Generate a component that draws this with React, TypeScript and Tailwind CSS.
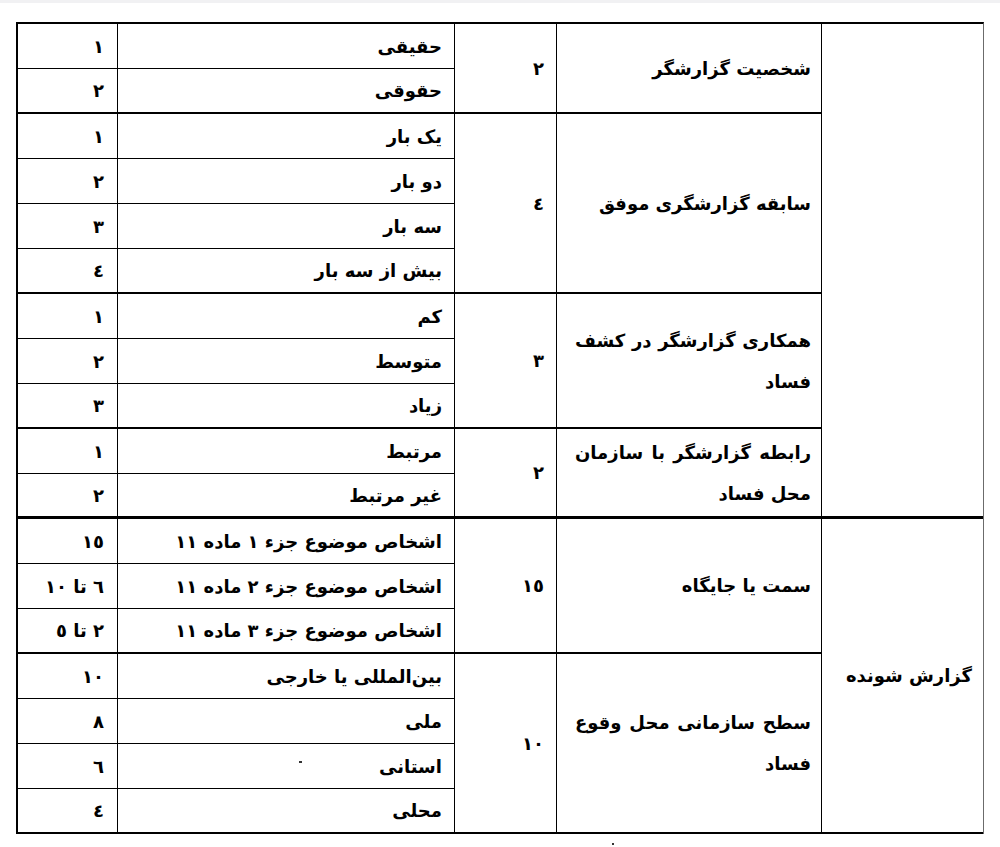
import React from "react";

type Opt = { t: string; s: string };
type Group = { name: string[]; w: string; opts: Opt[] };
type Cat = { name: string; groups: Group[] };

const data: Cat[] = [
  {
    name: "",
    groups: [
      { name: ["شخصیت گزارشگر"], w: "٢", opts: [{ t: "حقیقی", s: "١" }, { t: "حقوقی", s: "٢" }] },
      {
        name: ["سابقه گزارشگری موفق"],
        w: "٤",
        opts: [
          { t: "یک بار", s: "١" },
          { t: "دو بار", s: "٢" },
          { t: "سه بار", s: "٣" },
          { t: "بیش از سه بار", s: "٤" },
        ],
      },
      {
        name: ["همکاری گزارشگر در کشف", "فساد"],
        w: "٣",
        opts: [
          { t: "کم", s: "١" },
          { t: "متوسط", s: "٢" },
          { t: "زیاد", s: "٣" },
        ],
      },
      {
        name: ["رابطه گزارشگر با سازمان", "محل فساد"],
        w: "٢",
        opts: [
          { t: "مرتبط", s: "١" },
          { t: "غیر مرتبط", s: "٢" },
        ],
      },
    ],
  },
  {
    name: "گزارش شونده",
    groups: [
      {
        name: ["سمت یا جایگاه"],
        w: "١٥",
        opts: [
          { t: "اشخاص موضوع جزء ١ ماده ١١", s: "١٥" },
          { t: "اشخاص موضوع جزء ٢ ماده ١١", s: "٦ تا ١٠" },
          { t: "اشخاص موضوع جزء ٣ ماده ١١", s: "٢ تا ٥" },
        ],
      },
      {
        name: ["سطح سازمانی محل وقوع", "فساد"],
        w: "١٠",
        opts: [
          { t: "بین‌المللی یا خارجی", s: "١٠" },
          { t: "ملی", s: "٨" },
          { t: "استانی", s: "٦" },
          { t: "محلی", s: "٤" },
        ],
      },
    ],
  },
];

const B_THIN = "border-b-[1.5px]";
const B_GROUP = "border-b-[2.5px]";
const B_CAT = "border-b-[3px]";

function OptRow({ o, bottom }: { o: Opt; bottom: string }) {
  return (
    <div className={`flex h-[45px] border-black ${bottom}`}>
      <div className="flex-1 flex items-center pr-[12px] border-l-[1.5px] border-black">{o.t}</div>
      <div className="w-[99px] shrink-0 flex items-center pr-[13px]">{o.s}</div>
    </div>
  );
}

function GroupBlock({ g, bottom }: { g: Group; bottom: string }) {
  return (
    <div className="flex">
      <div className={`w-[265px] shrink-0 flex items-center pr-[10px] pl-[18px] border-l-[1.5px] border-black ${bottom}`}>
        {g.name.length === 1 ? (
          <div>{g.name[0]}</div>
        ) : (
          <div className="w-full leading-[41px]">
            <div className="text-justify [text-align-last:justify]">{g.name[0]}</div>
            <div>{g.name[1]}</div>
          </div>
        )}
      </div>
      <div className={`w-[102px] shrink-0 flex items-center pr-[12px] border-l-[1.5px] border-black ${bottom}`}>{g.w}</div>
      <div className="flex-1">
        {g.opts.map((o, i) => (
          <OptRow key={i} o={o} bottom={i === g.opts.length - 1 ? bottom : B_THIN} />
        ))}
      </div>
    </div>
  );
}

export default function App() {
  return (
    <div className="min-h-[847px] bg-white pt-[22px] pl-[16px] relative">
      <div className="absolute left-0 right-0 top-0 h-[3px] bg-[#f1f1f3]" />
      <div
        dir="rtl"
        className="w-[968px] border-t-2 border-l-2 border-r border-t-black border-l-black border-r-[#6b6b6b] text-black text-[18px] font-bold"
        style={{ fontFamily: '"DejaVu Sans", "Noto Sans", sans-serif' }}
      >
        {data.map((c, ci) => {
          const catBottom = ci === 0 ? B_CAT : B_GROUP;
          return (
            <div key={ci} className="flex">
              <div className={`w-[162px] shrink-0 flex items-center pr-[11px] border-l-[1.5px] border-black ${catBottom}`}>
                {c.name}
              </div>
              <div className="flex-1">
                {c.groups.map((g, gi) => (
                  <GroupBlock key={gi} g={g} bottom={gi === c.groups.length - 1 ? catBottom : B_GROUP} />
                ))}
              </div>
            </div>
          );
        })}
      </div>
      <div className="absolute left-[299px] top-[761px] w-[3px] h-[2px] bg-[#333]" />
      <div className="absolute left-[612px] top-[843px] w-[2px] h-[2px] bg-[#333]" />
    </div>
  );
}
